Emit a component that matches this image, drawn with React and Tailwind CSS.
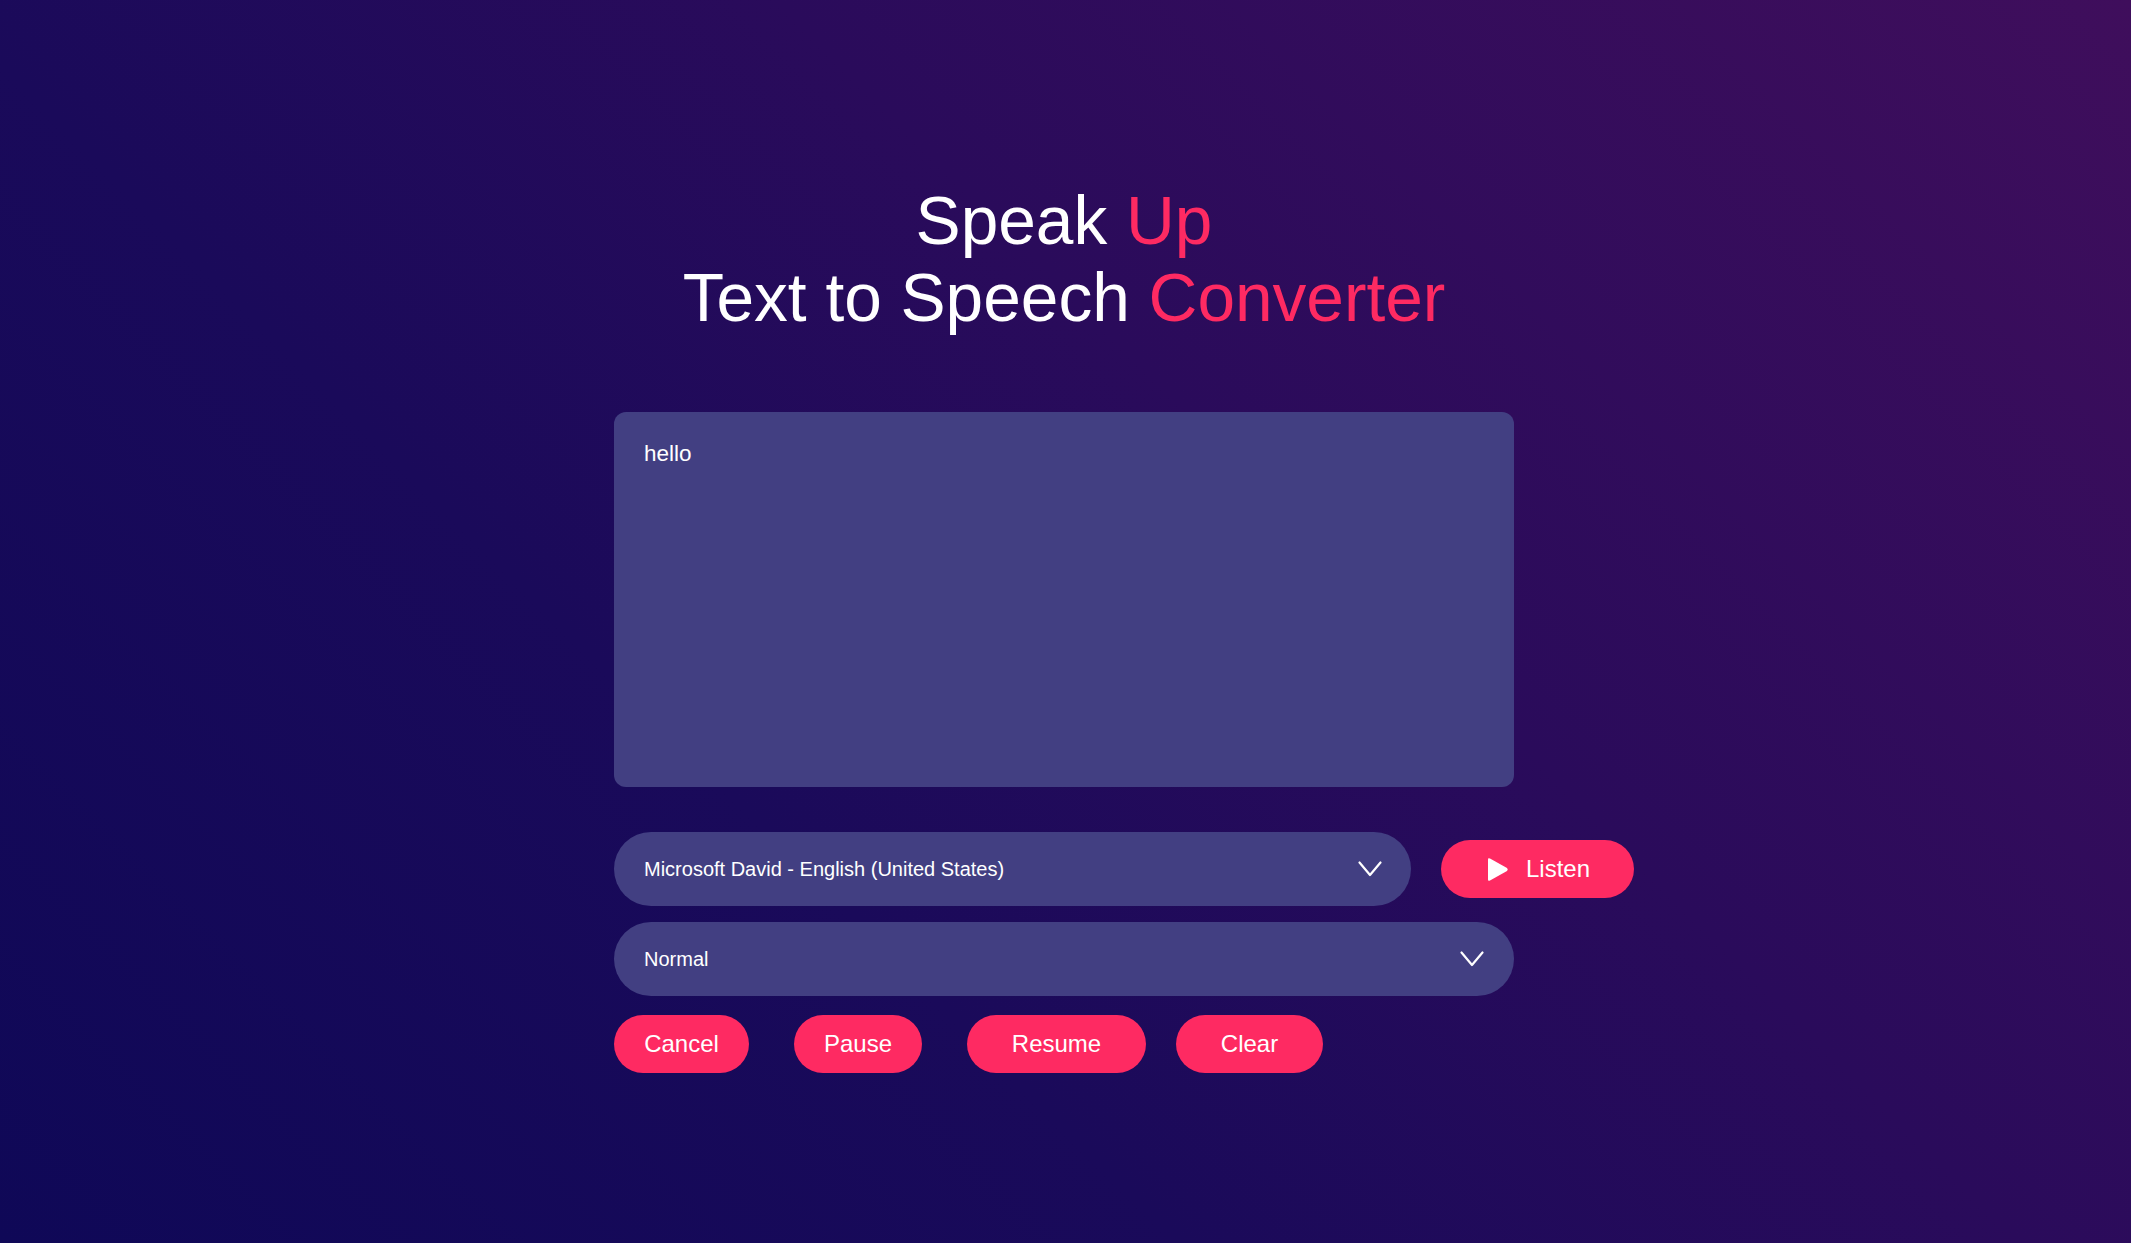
import React from "react";

function Chevron() {
  return (
    <svg width="24" height="16" viewBox="0 0 24 16" fill="none" className="shrink-0">
      <path d="M1.5 1.5 L12 14 L22.5 1.5" stroke="white" strokeWidth="2.2" strokeLinecap="round" strokeLinejoin="round" />
    </svg>
  );
}

function Play() {
  return (
    <svg width="23" height="25" viewBox="0 0 23 25" className="shrink-0">
      <path d="M2 2.5 Q2 0.5 4 1.6 L21 11 Q22.5 12.5 21 14 L4 23.4 Q2 24.5 2 22.5 Z" fill="white" />
    </svg>
  );
}

export default function App() {
  const font = { fontFamily: '"Liberation Sans", Arial, sans-serif' };
  return (
    <div
      className="flex min-h-[1243px] w-full justify-center pr-[3px] bg-[linear-gradient(45deg,#0f0857_0%,#1a0a5a_35%,#2a0b5b_60%,#3f0e5c_100%)] text-white"
      style={font}
    >
      <div className="flex w-[900px] flex-col pt-[182px]">
        <h1 className="text-center text-[67.6px] leading-[77px] font-normal">
          <div>
            Speak <span className="text-[#fe2a62]">Up</span>
          </div>
          <div className="whitespace-nowrap">
            Text to Speech <span className="text-[#fe2a62]">Converter</span>
          </div>
        </h1>

        <div className="mt-[76px] h-[375px] w-[900px] rounded-[12px] bg-[#423f82] px-[30px] pt-[29px] text-[22.5px] leading-[25px]">
          hello
        </div>

        <div className="mt-[45px] flex items-center">
          <div className="flex h-[74px] w-[797px] shrink-0 items-center justify-between rounded-full bg-[#423f82] pl-[30px] pr-[29px] text-[20px]">
            <span>Microsoft David - English (United States)</span>
            <Chevron />
          </div>
          <button className="ml-[30px] flex h-[58px] w-[193px] shrink-0 items-center rounded-full bg-[#fe2a62] pl-[45px] text-[24px] text-white">
            <Play />
            <span className="ml-[17px]">Listen</span>
          </button>
        </div>

        <div className="mt-[16px] flex h-[74px] w-[900px] items-center justify-between rounded-full bg-[#423f82] pl-[30px] pr-[30px] text-[20px]">
          <span>Normal</span>
          <Chevron />
        </div>

        <div className="mt-[19px] flex items-center">
          <button className="flex h-[58px] w-[135px] items-center justify-center rounded-full bg-[#fe2a62] text-[24px] text-white">
            Cancel
          </button>
          <button className="ml-[45px] flex h-[58px] w-[128px] items-center justify-center rounded-full bg-[#fe2a62] text-[24px] text-white">
            Pause
          </button>
          <button className="ml-[45px] flex h-[58px] w-[179px] items-center justify-center rounded-full bg-[#fe2a62] text-[24px] text-white">
            Resume
          </button>
          <button className="ml-[30px] flex h-[58px] w-[147px] items-center justify-center rounded-full bg-[#fe2a62] text-[24px] text-white">
            Clear
          </button>
        </div>
      </div>
    </div>
  );
}
